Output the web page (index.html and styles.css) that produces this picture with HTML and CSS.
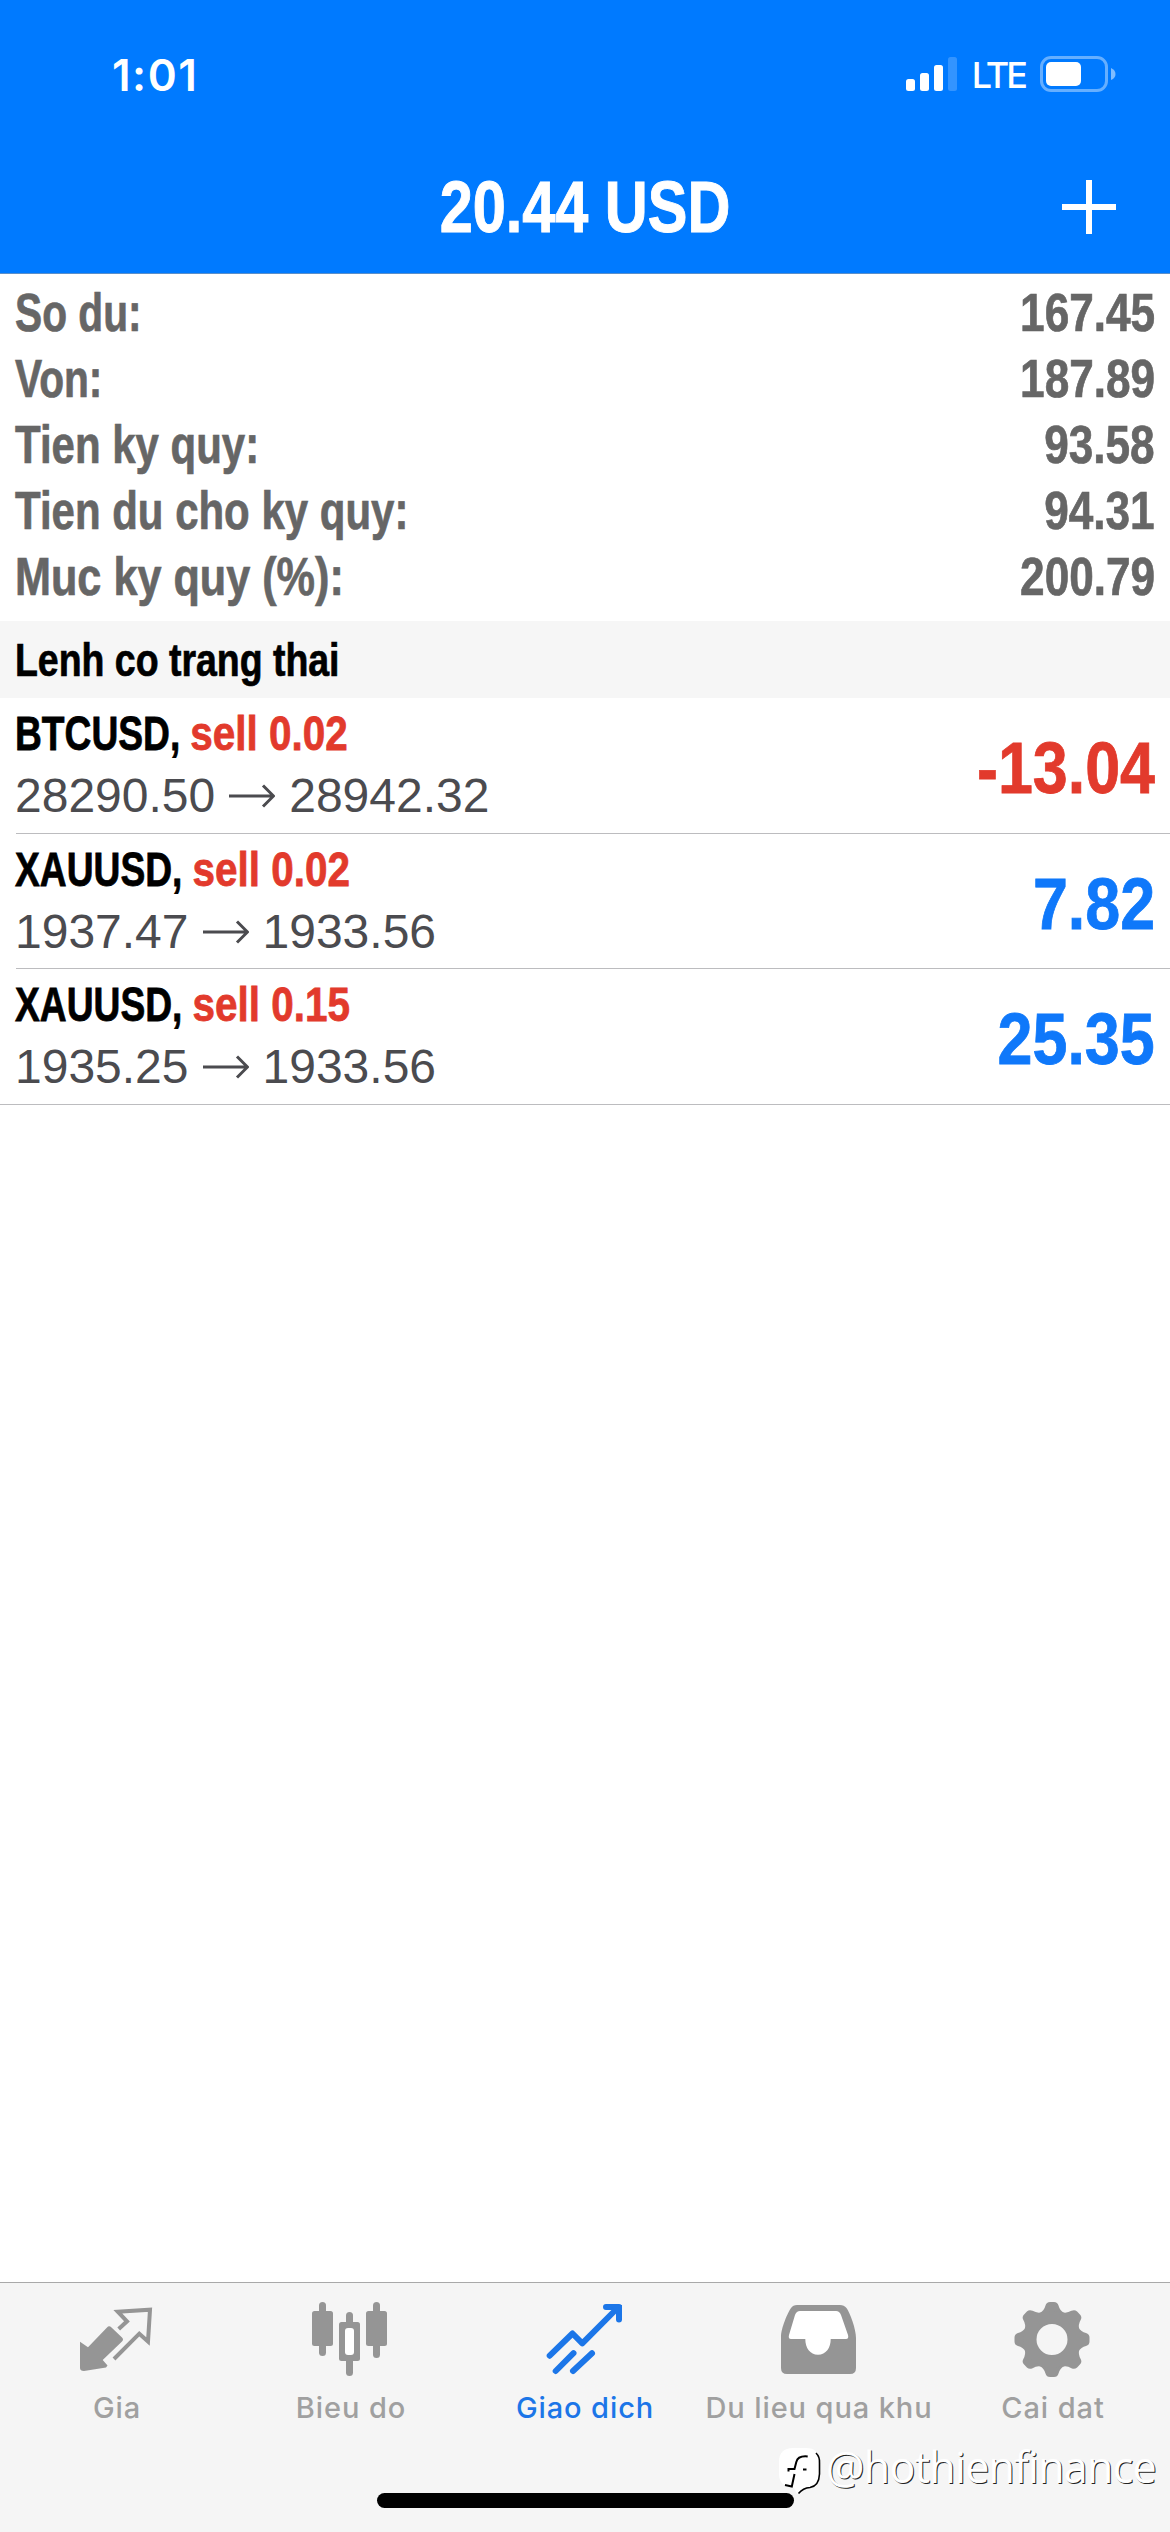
FILE: index.html
```html
<!DOCTYPE html>
<html lang="vi">
<head>
<meta charset="utf-8">
<title>Giao dich</title>
<link rel="stylesheet" href="styles.css">
</head>
<body>
<header class="header">
  <div class="status">
    <span class="time">1:01</span>
    <div class="status-right">
      <svg class="signal" viewBox="0 0 51 34" fill="#fff"><rect x="0" y="22" width="9" height="12" rx="2.5"/><rect x="14" y="16" width="9" height="18" rx="2.5"/><rect x="28" y="8" width="9" height="26" rx="2.5"/><rect x="42" y="0" width="9" height="34" rx="2.5" opacity=".2"/></svg>
      <span class="network">LTE</span>
      <svg class="battery" viewBox="0 0 76 36"><rect x="1.5" y="1.5" width="65" height="33" rx="9.5" fill="none" stroke="#fff" stroke-opacity=".4" stroke-width="3"/><rect x="6" y="6" width="35" height="24" rx="5" fill="#fff"/><path d="M71 12Q75.500 14 75.500 18T71 24Z" fill="#fff" opacity=".5"/></svg>
    </div>
  </div>
  <div class="navbar">
    <h1 class="title">20.44 USD</h1>
    <svg class="add" viewBox="0 0 54 54" fill="#fff"><path d="M24 0h6v24h24v6H30v24h-6V30H0v-6h24z"/></svg>
  </div>
</header>
<main class="content">
  <dl class="summary">
    <div class="summary-row"><dt>So du:</dt><dd>167.45</dd></div>
    <div class="summary-row"><dt>Von:</dt><dd>187.89</dd></div>
    <div class="summary-row"><dt>Tien ky quy:</dt><dd>93.58</dd></div>
    <div class="summary-row"><dt>Tien du cho ky quy:</dt><dd>94.31</dd></div>
    <div class="summary-row"><dt>Muc ky quy (%):</dt><dd>200.79</dd></div>
  </dl>
  <div class="section"><h2>Lenh co trang thai</h2></div>
  <ul class="positions">
    <li class="position">
      <div class="deal">
        <div class="symbol">BTCUSD, <span class="sell">sell 0.02</span></div>
        <div class="prices">28290.50<svg class="arrow" viewBox="0 0 46 24"><path d="M0 12H44M34 1.500L44.500 12L34 22.500"/></svg>28942.32</div>
      </div>
      <div class="profit loss">-13.04</div>
    </li>
    <li class="position">
      <div class="deal">
        <div class="symbol">XAUUSD, <span class="sell">sell 0.02</span></div>
        <div class="prices">1937.47<svg class="arrow" viewBox="0 0 46 24"><path d="M0 12H44M34 1.500L44.500 12L34 22.500"/></svg>1933.56</div>
      </div>
      <div class="profit">7.82</div>
    </li>
    <li class="position">
      <div class="deal">
        <div class="symbol">XAUUSD, <span class="sell">sell 0.15</span></div>
        <div class="prices">1935.25<svg class="arrow" viewBox="0 0 46 24"><path d="M0 12H44M34 1.500L44.500 12L34 22.500"/></svg>1933.56</div>
      </div>
      <div class="profit">25.35</div>
    </li>
  </ul>
</main>
<footer class="footer">
  <nav class="tabs">
    <a class="tab">
      <svg class="icon" viewBox="0 0 78 78"><path fill="currentColor" d="M2 41.700L10 47.300L29 27.500Q31 25 33.500 27.500L44 37.500Q46 39.500 44 41.500L24.700 60L29.500 65.500L28 67.500L6 71Q2 71 2 68Z"/><path fill="none" stroke="currentColor" stroke-width="4" d="M40.700 29L49 21.300L39.800 11.700L72 9.700L70 41.500L61.300 33.700L36 59"/></svg>
      <span>Gia</span>
    </a>
    <a class="tab">
      <svg class="icon" viewBox="0 0 78 78" fill="currentColor"><rect x="7" y="2" width="7" height="54" rx="3.500"/><rect y="11" width="21" height="35" rx="2.500"/><rect x="61" y="2" width="7" height="56" rx="3.500"/><rect x="54" y="11" width="21" height="35" rx="2.500"/><rect x="34" y="12" width="7" height="64" rx="3.500"/><rect x="27" y="22" width="21" height="39" rx="2.500"/><rect x="33" y="28" width="9" height="27" rx="3" fill="#fff"/></svg>
      <span>Bieu do</span>
    </a>
    <a class="tab active">
      <svg class="icon" viewBox="0 0 78 78" fill="none" stroke="currentColor" stroke-width="6"><path stroke-linecap="round" stroke-linejoin="round" d="M3.700 55.700L26.500 33.500L36.300 43.300L72 7.500M60 7H73V19.500"/><path d="M63 5H76V17Z" fill="currentColor" stroke="none"/><path stroke-linecap="round" d="M9.700 71L27.500 53.200M27 71L46 53.200"/></svg>
      <span>Giao dich</span>
    </a>
    <a class="tab">
      <svg class="icon" viewBox="0 0 78 78"><path fill="currentColor" d="M1 37C1 28 8 12 11 8Q13 5 17 5H60Q64 5 66.500 8C70 13 76 29 76 38V68Q76 74 70 74H7Q1 74 1 68Z"/><path fill="#fff" d="M25.300 39C25.300 48 30 54.700 38 54.700S50.700 48 50.700 39H66Q69 39 68 35L61 15Q59.500 11 56 11H20Q16.500 11 15 15L9 35Q8 39 11 39Z"/></svg>
      <span>Du lieu qua khu</span>
    </a>
    <a class="tab">
      <svg class="icon" viewBox="0 0 78 78" fill="currentColor"><defs><path id="tooth" d="M26 13Q30.200 10.500 31.500 5.500Q32.500 2 36 2H40Q43.500 2 44.500 5.500Q45.800 10.500 50 13L46 22H30Z"/></defs><use href="#tooth"/><use href="#tooth" transform="rotate(45 38 39.500)"/><use href="#tooth" transform="rotate(90 38 39.500)"/><use href="#tooth" transform="rotate(135 38 39.500)"/><use href="#tooth" transform="rotate(180 38 39.500)"/><use href="#tooth" transform="rotate(225 38 39.500)"/><use href="#tooth" transform="rotate(270 38 39.500)"/><use href="#tooth" transform="rotate(315 38 39.500)"/><circle cx="38" cy="39.500" r="22" fill="none" stroke="currentColor" stroke-width="13"/></svg>
      <span>Cai dat</span>
    </a>
  </nav>
  <div class="home-indicator"></div>
  <div class="credit">
    <svg class="credit-logo" viewBox="0 0 44 48"><path fill="#fff" d="M14 0H27Q40 0 40 13V26Q40 38 30 39Q22 40 18 46L15 40Q0 39 0 26V14Q0 0 14 0Z"/><path fill="none" stroke="#000" stroke-width="1.600" d="M37 5Q41 9 40.500 15V26Q40 38 31 39.500Q24 40 19.500 45.500"/><path fill="none" stroke="#000" stroke-width="2" d="M28.700 8.500Q19 7.500 17.300 14L15.500 21H9.500V23.500M15.500 26L12.800 38.500L6 37M24 21.500H27.500"/></svg>
    <span class="credit-name">@hothienfinance</span>
  </div>
</footer>
</body>
</html>
```
FILE: styles.css
```css
* { box-sizing: border-box; margin: 0; padding: 0; }

body {
  width: 1170px;
  height: 2532px;
  display: flex;
  flex-direction: column;
  background: #fff;
  font-family: "Liberation Sans", Arial, sans-serif;
  overflow: hidden;
}

.header {
  height: 274px;
  background: #007aff;
  border-bottom: 1px solid #5b8fc9;
  color: #fff;
}
.status {
  height: 141px;
  padding: 48px 54px 0 112px;
  display: flex;
  justify-content: space-between;
  align-items: flex-start;
  font-family: Inter, sans-serif;
}
.time { font-size: 44px; line-height: 54px; font-weight: 600; letter-spacing: 1.5px; }
.status-right { display: flex; align-items: center; height: 52px; }
.signal { width: 51px; height: 34px; }
.network { margin: 2px 15px 0 15px; font-size: 36px; font-weight: 500; letter-spacing: -3px; }
.battery { width: 76px; height: 36px; }

.navbar {
  height: 132px;
  padding: 0 54px;
  display: grid;
  grid-template-columns: 54px 1fr 54px;
  align-items: center;
}
.title {
  grid-column: 2;
  text-align: center;
  font-size: 73px;
  line-height: 84px;
  transform: scaleX(.814);
  -webkit-text-stroke: 1px currentColor;
}
.add { width: 54px; height: 54px; }

/* Condensed bold text: the regular bold face, narrowed from its aligned edge. */
.summary { height: 347px; padding: 6px 15px 0 15px; color: #666; }
.summary-row {
  display: flex;
  justify-content: space-between;
  font-size: 53px;
  line-height: 66px;
  font-weight: 700;
  -webkit-text-stroke: .7px currentColor;
}
.summary-row dt { transform: scaleX(.792); transform-origin: left; }
.summary-row:nth-child(1) dt, .summary-row:nth-child(2) dt { transform: scaleX(.768); }
.summary-row:nth-child(5) dt { transform: scaleX(.815); }
.summary-row dd { transform: scaleX(.833); transform-origin: right; }

.section { height: 77px; padding: 1px 15px 0; background: #f6f6f6; }
.section h2 {
  width: max-content;
  font-size: 46px;
  line-height: 77px;
  transform: scaleX(.814);
  transform-origin: left;
  -webkit-text-stroke: .7px currentColor;
}

.positions { list-style: none; }
.position {
  height: 135px;
  margin-left: 16px;
  padding-right: 15px;
  display: flex;
  justify-content: space-between;
  align-items: center;
  border-bottom: 1px solid #bcbcbf;
}
.position:first-child { height: 136px; }
.position:last-child { height: 136px; margin-left: 0; padding-left: 16px; }
.deal { margin: -1px 0 0 -1px; }
.symbol {
  width: max-content;
  font-size: 49px;
  line-height: 62px;
  font-weight: 700;
  transform: scaleX(.759);
  transform-origin: left;
  -webkit-text-stroke: .8px currentColor;
}
.sell { display: inline-block; transform: scaleX(1.087); transform-origin: left; color: #e23a2c; }
.prices {
  display: flex;
  align-items: center;
  font-size: 48px;
  line-height: 64px;
  color: #4b4b4f;
}
.arrow { width: 46px; height: 24px; margin: 0 14px; fill: none; stroke: #4b4b4f; stroke-width: 3; }
.profit {
  padding-top: 5px;
  font-size: 73px;
  line-height: 84px;
  font-weight: 700;
  color: #0f78fa;
  transform: scaleX(.86);
  transform-origin: right;
  -webkit-text-stroke: .8px currentColor;
}
.loss { color: #e23a2c; }

.footer {
  position: relative;
  height: 250px;
  margin-top: auto;
  background: #f5f5f5;
  border-top: 1px solid #a9a9a9;
}
.tabs {
  height: 210px;
  padding-top: 17px;
  display: grid;
  grid-template-columns: repeat(5, 1fr);
  font-family: Inter, sans-serif;
  font-size: 29px;
  font-weight: 500;
  letter-spacing: .9px;
  color: #959595;
}
.tab { display: flex; flex-direction: column; align-items: center; gap: 12px; }
.tab span { line-height: 36px; white-space: nowrap; color: #a0a0a0; }
.icon { width: 78px; height: 78px; }
.active, .active span { color: #1c76e8; }
.home-indicator { width: 417px; height: 15px; margin: 0 auto; border-radius: 8px; background: #000; }

.credit {
  position: absolute;
  left: 779px;
  top: 165px;
  display: flex;
  align-items: flex-start;
  gap: 3px;
}
.credit-logo { width: 44px; height: 48px; }
.credit-name {
  margin-top: -4px;
  font-family: "Open Sans", sans-serif;
  font-weight: 400;
  font-size: 43px;
  line-height: 46px;
  letter-spacing: -.7px;
  color: #fff;
  text-shadow: 1px 1px 0 #222;
}
```
